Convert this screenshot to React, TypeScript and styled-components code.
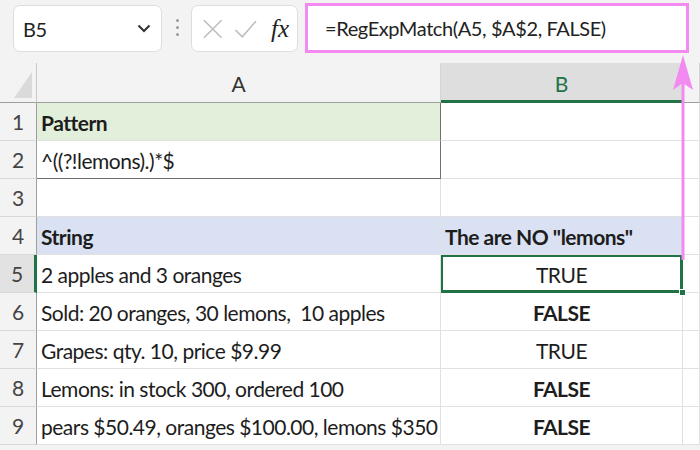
import React from 'react';
import styled, { createGlobalStyle } from 'styled-components';

const GlobalStyle = createGlobalStyle`
  html, body { margin: 0; padding: 0; background: #ffffff; }
  body { font-family: Lato, "Liberation Sans", sans-serif; color: #1f1f1f; }
  * { box-sizing: border-box; }
`;

const GREEN = '#217346';
const PINK = '#f38af1';

const Page = styled.div`
  position: relative;
  width: 700px;
  height: 450px;
  overflow: hidden;
  background: #f3f3f3;
`;

const Toolbar = styled.div`
  display: flex;
  align-items: flex-start;
  height: 63px;
  padding: 5px 0 0 13px;
`;

const NameBox = styled.div`
  display: flex;
  align-items: center;
  justify-content: space-between;
  width: 149px;
  height: 47px;
  padding: 0 10px 0 9px;
  background: #fff;
  border: 1px solid #dedede;
  border-radius: 7px;
  font-size: 20px;
  letter-spacing: -0.5px;
  color: #222;
`;

const Dots = styled.div`
  display: flex;
  flex-direction: column;
  gap: 4px;
  margin: 14px 12px 0 14px;
  span {
    width: 3px;
    height: 3px;
    border-radius: 50%;
    background: #9a9a9a;
  }
`;

const FxBox = styled.div`
  display: flex;
  align-items: center;
  gap: 10px;
  width: 107px;
  height: 47px;
  padding: 0 8px 0 10px;
  background: #fff;
  border: 1px solid #dedede;
  border-radius: 7px;
`;

const Fx = styled.span`
  font-family: "Liberation Serif", serif;
  font-style: italic;
  font-size: 25px;
  color: #222;
  margin-left: 4px;
`;

const FormulaBar = styled.div`
  display: flex;
  align-items: center;
  width: 384px;
  height: 50px;
  margin: -2px 0 0 7px;
  padding-left: 17px;
  background: #fff;
  border: 3px solid ${PINK};
  font-size: 20px;
  letter-spacing: -0.4px;
  color: #222;
`;

const Sheet = styled.div`
  display: grid;
  grid-template-columns: 37px 404px 242px 17px;
  grid-template-rows: 40px repeat(9, 38px);
  background: #fff;
`;

const Corner = styled.div`
  position: relative;
  background: #f3f3f3;
  border-right: 1px solid #c9c9c9;
  border-bottom: 1px solid #9e9e9e;
  &::after {
    content: '';
    position: absolute;
    right: 4px;
    bottom: 4px;
    border-left: 18px solid transparent;
    border-bottom: 26px solid #dadada;
  }
`;

const ColHead = styled.div<{ $active?: boolean }>`
  display: flex;
  align-items: center;
  justify-content: center;
  font-size: 21px;
  background: ${p => (p.$active ? '#dedede' : '#f3f3f3')};
  color: ${p => (p.$active ? GREEN : '#333')};
  border-right: 1px solid #d4d4d4;
  border-bottom: ${p => (p.$active ? `3px solid ${GREEN}` : '1px solid #9e9e9e')};
  padding-top: ${p => (p.$active ? '4px' : '2px')};
`;

const RowHead = styled.div<{ $active?: boolean }>`
  display: flex;
  align-items: center;
  justify-content: center;
  font-size: 21px;
  color: #444;
  background: ${p => (p.$active ? '#e2e2e2' : '#f3f3f3')};
  border-bottom: 1px solid #d8d8d8;
  border-right: ${p => (p.$active ? `3px solid ${GREEN}` : '1px solid #9e9e9e')};
`;

const Cell = styled.div<{
  $bg?: string;
  $bold?: boolean;
  $center?: boolean;
  $boxRight?: boolean;
  $boxBottom?: boolean;
}>`
  position: relative;
  display: flex;
  align-items: center;
  justify-content: ${p => (p.$center ? 'center' : 'flex-start')};
  padding: 1px 4px 0 4px;
  font-size: 21px;
  font-weight: ${p => (p.$bold ? 700 : 400)};
  letter-spacing: -0.5px;
  white-space: nowrap;
  color: #1d1d1d;
  background: ${p => p.$bg || '#fff'};
  border-right: 1px solid ${p => (p.$boxRight ? '#6f6f6f' : '#e1e1e1')};
  border-bottom: 1px solid ${p => (p.$boxBottom ? '#6f6f6f' : '#e1e1e1')};
`;

const Selected = styled(Cell)`
  box-shadow: inset 0 0 0 2px ${GREEN};
  border-color: ${GREEN};
`;

const FillHandle = styled.span`
  position: absolute;
  right: -4px;
  bottom: -4px;
  width: 7px;
  height: 7px;
  background: ${GREEN};
  border: 1px solid #fff;
  z-index: 2;
`;

const Arrow = styled.svg`
  position: absolute;
  left: 671px;
  top: 54px;
  pointer-events: none;
`;

const Icon = ({ kind }: { kind: 'x' | 'check' | 'chev' }) => {
  if (kind === 'chev')
    return (
      <svg width="14" height="9" viewBox="0 0 14 9">
        <path d="M1.5 1.5 L7 7 L12.5 1.5" fill="none" stroke="#333" strokeWidth="2" />
      </svg>
    );
  if (kind === 'x')
    return (
      <svg width="22" height="22" viewBox="0 0 22 22">
        <path d="M2 2 L20 20 M20 2 L2 20" stroke="#bdbdbd" strokeWidth="1.6" />
      </svg>
    );
  return (
    <svg width="24" height="20" viewBox="0 0 24 20">
      <path d="M1.5 11 L8.5 18 L22.5 2" fill="none" stroke="#bdbdbd" strokeWidth="1.6" />
    </svg>
  );
};

type Row = { a: string; b: string; bBold?: boolean };

const data: Row[] = [
  { a: '2 apples and 3 oranges', b: 'TRUE' },
  { a: 'Sold: 20 oranges, 30 lemons,\u00a0 10 apples', b: 'FALSE', bBold: true },
  { a: 'Grapes: qty. 10, price $9.99', b: 'TRUE' },
  { a: 'Lemons: in stock 300, ordered 100', b: 'FALSE', bBold: true },
  { a: 'pears $50.49, oranges $100.00, lemons $350', b: 'FALSE', bBold: true },
];

export default function App() {
  return (
    <Page>
      <GlobalStyle />
      <Toolbar>
        <NameBox>
          B5
          <Icon kind="chev" />
        </NameBox>
        <Dots>
          <span />
          <span />
          <span />
        </Dots>
        <FxBox>
          <Icon kind="x" />
          <Icon kind="check" />
          <Fx>fx</Fx>
        </FxBox>
        <FormulaBar>=RegExpMatch(A5, $A$2, FALSE)</FormulaBar>
      </Toolbar>

      <Sheet>
        <Corner />
        <ColHead>A</ColHead>
        <ColHead $active>B</ColHead>
        <ColHead />

        <RowHead>1</RowHead>
        <Cell $bg="#e2efda" $bold $boxRight>Pattern</Cell>
        <Cell />
        <Cell />

        <RowHead>2</RowHead>
        <Cell $boxRight $boxBottom>^((?!lemons).)*$</Cell>
        <Cell />
        <Cell />

        <RowHead>3</RowHead>
        <Cell />
        <Cell />
        <Cell />

        <RowHead>4</RowHead>
        <Cell $bg="#d9e1f2" $bold>String</Cell>
        <Cell $bg="#d9e1f2" $bold>The are NO "lemons"</Cell>
        <Cell />

        {data.map((r, i) => {
          const n = i + 5;
          const B = n === 5 ? Selected : Cell;
          return (
            <React.Fragment key={n}>
              <RowHead $active={n === 5}>{n}</RowHead>
              <Cell>{r.a}</Cell>
              <B $center $bold={r.bBold}>
                {r.b}
                {n === 5 && <FillHandle />}
              </B>
              <Cell />
            </React.Fragment>
          );
        })}
      </Sheet>

      <Arrow width="24" height="206" viewBox="0 0 24 206">
        <line x1="12" y1="20" x2="12" y2="206" stroke={PINK} strokeWidth="3" />
        <path d="M12 1 L22 36 L12 29 L2 36 Z" fill={PINK} />
      </Arrow>
    </Page>
  );
}
